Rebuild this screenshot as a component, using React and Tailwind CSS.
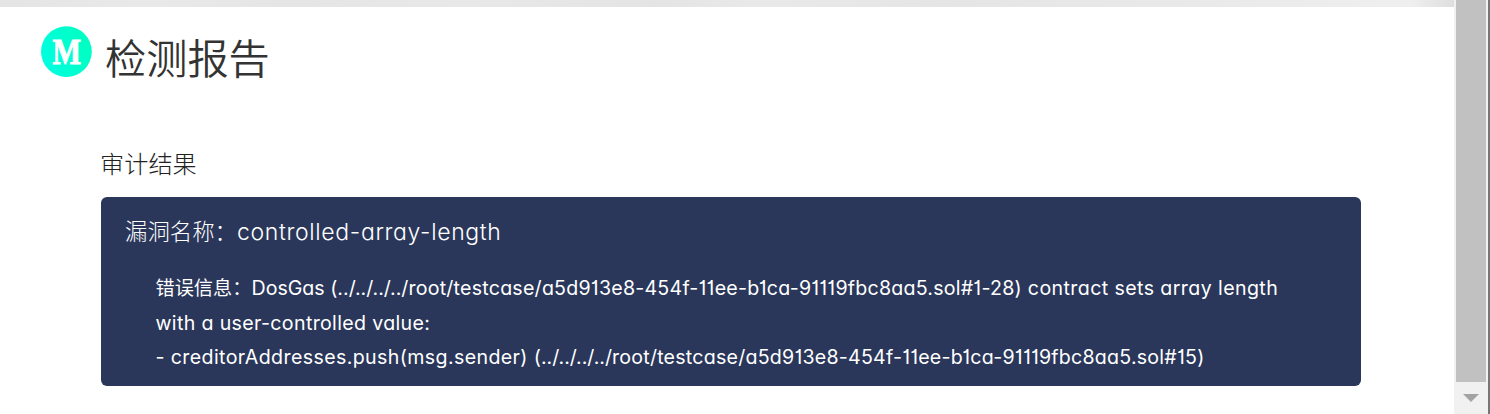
import React from "react";

function Logo() {
  return (
    <svg className="h-[52px] w-[52px] shrink-0" viewBox="0 0 52 52">
      <defs>
        <linearGradient id="mint" x1="0" y1="0.7" x2="1" y2="0.3">
          <stop offset="0" stopColor="#00ffe0" />
          <stop offset="1" stopColor="#00ffc0" />
        </linearGradient>
      </defs>
      <circle cx="26.4" cy="26.6" r="25.4" fill="url(#mint)" />
      <text
        x="12.4"
        y="39"
        fontFamily="Liberation Serif, serif"
        fontWeight="700"
        fontSize="35"
        textLength="28.6"
        lengthAdjust="spacingAndGlyphs"
        fill="#fff"
        stroke="#fff"
        strokeWidth="0.9"
      >
        M
      </text>
    </svg>
  );
}

function Scrollbar() {
  return (
    <div className="flex h-full w-9 shrink-0 bg-[#f1f1f1]">
      <div className="flex w-[34px] flex-col pr-0.5 pl-0.5">
        <div className="h-[382px] w-[30px] bg-[#c1c1c1]" />
        <div className="flex flex-1 justify-center pt-3">
          <svg className="h-2 w-4" viewBox="0 0 16 8">
            <path d="M0 0h16L8 8z" fill="#a3a3a3" />
          </svg>
        </div>
      </div>
      <div className="w-0.5 bg-[#777777]" />
    </div>
  );
}

export default function App() {
  return (
    <div className="flex h-[414px] w-[1490px] overflow-hidden bg-white font-['Inter','Noto_Sans_CJK_SC',sans-serif] [font-feature-settings:'cv11','cv01']">
      <main className="flex w-[1454px] shrink-0 flex-col">
        <div className="h-[7px] bg-[linear-gradient(100deg,#e4e4e4,#e9e9e9_10%,#e5e5e5_20%,#e8e8e8_32%,#e4e4e4_45%,#e9e9e9_52%,#e5e5e5_65%,#eaeaea_85%,#efefef_97%,#dedede)]" />
        <header className="flex h-[71px] pt-[18px] pl-10">
          <Logo />
          <h1 className="ml-[13px] h-[60px] pt-1 text-[41.2px] leading-[60px] font-[350] whitespace-nowrap text-[#333]">检测报告</h1>
        </header>
        <section className="pt-[69px] pl-[100px]">
          <h2 className="h-9 text-[24.2px] leading-9 font-light text-[#222]">审计结果</h2>
          <div className="mt-[14px] ml-px h-[189px] w-[1260px] rounded-md bg-[#2a375a] text-white">
            <h3 className="flex h-[72px] pt-[15px] pl-6 text-[22.4px] leading-10 font-light whitespace-nowrap">
              <span className="w-[112px]">漏洞名称：</span>
              <span className="text-[23px] font-[350] tracking-[0.65px]">controlled-array-length</span>
            </h3>
            <div className="pt-[2px] pl-[54.5px] text-[19.6px] leading-[34.5px] tracking-[0.23px] whitespace-nowrap">
              <p className="flex h-[34.5px]">
                <span className="w-24 text-[19.2px] tracking-normal">错误信息：</span>
                <span>
                  <span className="tracking-normal">DosGas (../../../../</span>
                  root/testcase/a5d913e8-454f-11ee-b1ca-91119fbc8aa5.sol#1-28)
                  <span className="tracking-[0.4px]"> contract sets array length</span>
                </span>
              </p>
              <p className="h-[34px] tracking-[0.34px]">with a user-controlled value:</p>
              <p className="h-[34.5px]">
                <span className="tracking-[0.38px]">- creditorAddresses.push(msg.sender) </span>
                <span className="tracking-normal">(../../../../</span>
                root/testcase/a5d913e8-454f-11ee-b1ca-91119fbc8aa5.sol#15)
              </p>
            </div>
          </div>
        </section>
      </main>
      <Scrollbar />
    </div>
  );
}
